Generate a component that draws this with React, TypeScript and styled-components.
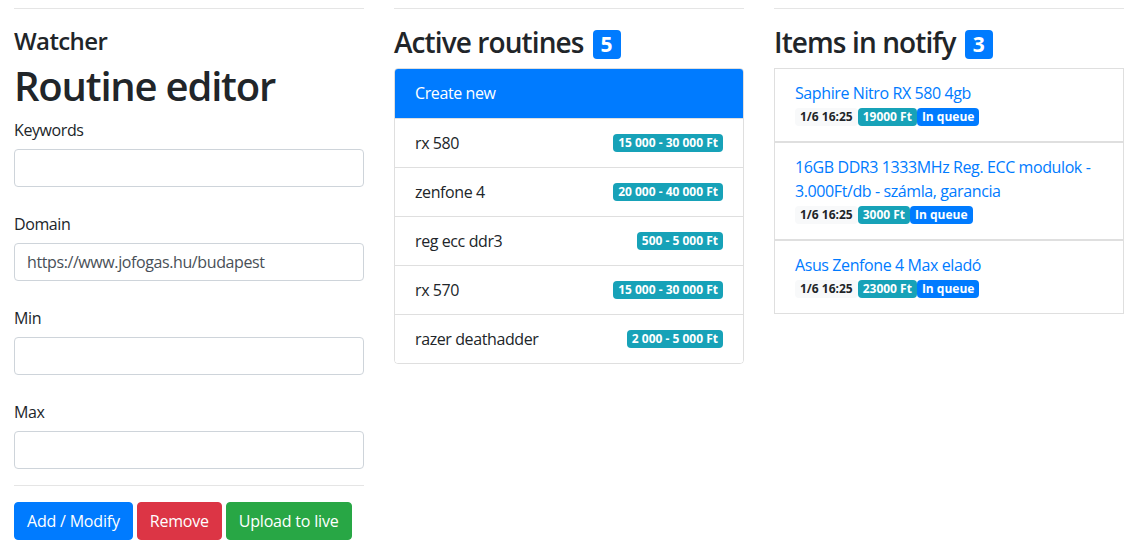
import React from "react";
import styled, { createGlobalStyle } from "styled-components";

const GlobalStyle = createGlobalStyle`
  html, body {
    margin: 0;
    padding: 0;
    background: #fff;
  }
  body {
    font-family: "Open Sans", "Noto Sans", "Liberation Sans", sans-serif;
    font-size: 16px;
    line-height: 1.5;
    letter-spacing: -0.4px;
    color: #212529;
  }
  * { box-sizing: border-box; }
`;

const Page = styled.div`
  display: grid;
  grid-template-columns: repeat(3, 350px);
  column-gap: 30px;
  align-items: start;
  padding: 8px 14px 0 14px;
`;

const Column = styled.section`
  display: flex;
  flex-direction: column;
`;

const Rule = styled.hr<{ $top?: number; $bottom?: number }>`
  border: 0;
  border-top: 1px solid rgba(0, 0, 0, 0.1);
  margin: ${(p) => p.$top ?? 0}px 0 ${(p) => p.$bottom ?? 0}px 0;
`;

const SubTitle = styled.h4`
  font-size: 24px;
  font-weight: 600;
  line-height: 1.2;
  letter-spacing: -0.6px;
  margin: 18px 0 6px 0;
`;

const Title = styled.h1`
  font-size: 40px;
  font-weight: 600;
  line-height: 1.2;
  letter-spacing: -1.2px;
  margin: 0 0 8px 0;
`;

const Form = styled.form`
  display: flex;
  flex-direction: column;
  gap: 25px;
  margin: 0;
`;

const FormGroup = styled.div`
  display: flex;
  flex-direction: column;
`;

const Label = styled.label`
  display: block;
  line-height: 24px;
  margin-bottom: 7px;
`;

const Input = styled.input`
  display: block;
  width: 100%;
  height: 38px;
  padding: 6px 12px;
  font-family: inherit;
  font-size: 16px;
  letter-spacing: -0.4px;
  line-height: 24px;
  color: #495057;
  background: #fff;
  border: 1px solid #ced4da;
  border-radius: 4px;
  outline: none;
`;

const ButtonRow = styled.div`
  display: flex;
  gap: 4px;
`;

const variantColor = {
  primary: "#007bff",
  danger: "#dc3545",
  success: "#28a745",
} as const;

const Button = styled.button<{ $variant: keyof typeof variantColor }>`
  font-family: inherit;
  font-size: 16px;
  letter-spacing: -0.2px;
  line-height: 24px;
  padding: 6px 12px;
  border-radius: 4px;
  color: #fff;
  border: 1px solid ${(p) => variantColor[p.$variant]};
  background: ${(p) => variantColor[p.$variant]};
  cursor: pointer;
`;

const SectionHeading = styled.h3`
  display: flex;
  align-items: center;
  gap: 9px;
  font-size: 28px;
  font-weight: 600;
  line-height: 1.2;
  letter-spacing: -0.9px;
  margin: 17px 0 8px 0;
`;

const CountBadge = styled.span`
  display: inline-block;
  font-size: 21px;
  font-weight: 700;
  line-height: 1;
  letter-spacing: 0;
  padding: 4px 8px;
  border-radius: 4px;
  background: #007bff;
  color: #fff;
  margin-top: 3px;
`;

const ListGroup = styled.div`
  display: flex;
  flex-direction: column;
  border: 1px solid rgba(0, 0, 0, 0.125);
  border-radius: 4px;
  overflow: hidden;
`;

const RoutineItem = styled.div<{ $active?: boolean }>`
  display: flex;
  align-items: center;
  justify-content: space-between;
  padding: 12px 20px;
  line-height: 24px;
  background: ${(p) => (p.$active ? "#007bff" : "#fff")};
  color: ${(p) => (p.$active ? "#fff" : "#212529")};
  border-top: ${(p) => (p.$active ? "none" : "1px solid rgba(0, 0, 0, 0.125)")};
  min-height: ${(p) => (p.$active ? "49px" : "48px")};
`;

const badgeBg = { info: "#17a2b8", primary: "#007bff", light: "#f8f9fa" } as const;

const Badge = styled.span<{ $kind: keyof typeof badgeBg }>`
  display: inline-block;
  font-size: 12px;
  font-weight: 700;
  line-height: 1;
  letter-spacing: 0;
  padding: 3px 5px;
  border-radius: 4px;
  white-space: nowrap;
  background: ${(p) => badgeBg[p.$kind]};
  color: ${(p) => (p.$kind === "light" ? "#212529" : "#fff")};
`;

const NotifyList = styled.div`
  display: flex;
  flex-direction: column;
`;

const NotifyItem = styled.div`
  border: 1px solid rgba(0, 0, 0, 0.125);
  padding: 12px 20px;
  background: #fff;
`;

const NotifyLink = styled.a`
  display: block;
  color: #007bff;
  text-decoration: none;
  line-height: 24px;
`;

const BadgeRow = styled.div`
  display: flex;
  align-items: center;
  height: 24px;
`;

const routines = [
  { name: "rx 580", range: "15 000 - 30 000 Ft" },
  { name: "zenfone 4", range: "20 000 - 40 000 Ft" },
  { name: "reg ecc ddr3", range: "500 - 5 000 Ft" },
  { name: "rx 570", range: "15 000 - 30 000 Ft" },
  { name: "razer deathadder", range: "2 000 - 5 000 Ft" },
];

const items = [
  { title: "Saphire Nitro RX 580 4gb", time: "1/6 16:25", price: "19000 Ft" },
  { title: "16GB DDR3 1333MHz Reg. ECC modulok - 3.000Ft/db - számla, garancia", time: "1/6 16:25", price: "3000 Ft" },
  { title: "Asus Zenfone 4 Max eladó", time: "1/6 16:25", price: "23000 Ft" },
];

export default function App() {
  return (
    <>
      <GlobalStyle />
      <Page>
        <Column>
          <Rule />
          <SubTitle>Watcher</SubTitle>
          <Title>Routine editor</Title>
          <Form onSubmit={(e) => e.preventDefault()}>
            <FormGroup>
              <Label>Keywords</Label>
              <Input type="text" defaultValue="" />
            </FormGroup>
            <FormGroup>
              <Label>Domain</Label>
              <Input type="text" defaultValue="https://www.jofogas.hu/budapest" />
            </FormGroup>
            <FormGroup>
              <Label>Min</Label>
              <Input type="text" defaultValue="" />
            </FormGroup>
            <FormGroup>
              <Label>Max</Label>
              <Input type="text" defaultValue="" />
            </FormGroup>
          </Form>
          <Rule $top={16} $bottom={16} />
          <ButtonRow>
            <Button $variant="primary">Add / Modify</Button>
            <Button $variant="danger">Remove</Button>
            <Button $variant="success">Upload to live</Button>
          </ButtonRow>
        </Column>
        <Column>
          <Rule />
          <SectionHeading>
            Active routines <CountBadge>5</CountBadge>
          </SectionHeading>
          <ListGroup>
            <RoutineItem $active>Create new</RoutineItem>
            {routines.map((r) => (
              <RoutineItem key={r.name}>
                <span>{r.name}</span>
                <Badge $kind="info">{r.range}</Badge>
              </RoutineItem>
            ))}
          </ListGroup>
        </Column>
        <Column>
          <Rule />
          <SectionHeading>
            Items in notify <CountBadge>3</CountBadge>
          </SectionHeading>
          <NotifyList>
            {items.map((it) => (
              <NotifyItem key={it.title}>
                <NotifyLink href="#">{it.title}</NotifyLink>
                <BadgeRow>
                  <Badge $kind="light">{it.time}</Badge>
                  <Badge $kind="info">{it.price}</Badge>
                  <Badge $kind="primary">In queue</Badge>
                </BadgeRow>
              </NotifyItem>
            ))}
          </NotifyList>
        </Column>
      </Page>
    </>
  );
}
